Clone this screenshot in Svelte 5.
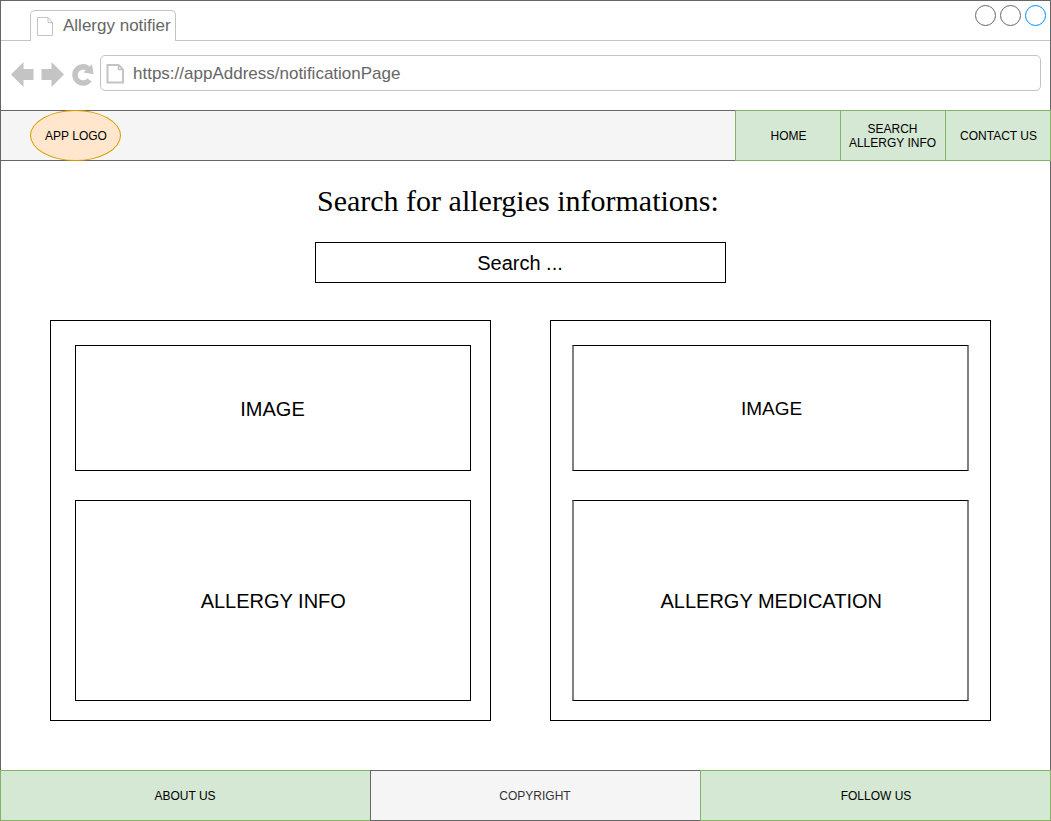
<script>
  const links = [
    { label: 'HOME', kind: 'home' },
    { label: 'SEARCH\nALLERGY INFO', kind: 'find' },
    { label: 'CONTACT US', kind: 'contact' }
  ];
  const cards = [
    { top: 'IMAGE', bottom: 'ALLERGY INFO', kind: 'info' },
    { top: 'IMAGE', bottom: 'ALLERGY MEDICATION', kind: 'medication' }
  ];
</script>

<div class="window">
  <div class="tabs">
    <div class="tab">
      <svg width="18" height="21" viewBox="0 0 18 21" fill="none" stroke="#c4c4c4">
        <path d="M1.5 1.5H12L16.5 6.5V19.5H1.5ZM12 1.5V6.5H16.5" />
      </svg>
      <span>Allergy notifier</span>
    </div>
    <svg class="controls" width="74" height="24" viewBox="0 0 74 24" fill="none" stroke="#666">
      <circle cx="11.5" cy="11.5" r="10" />
      <circle cx="36.5" cy="11.5" r="10" />
      <circle cx="61.5" cy="11.5" r="10" stroke="#008cff" />
    </svg>
  </div>

  <div class="toolbar">
    <svg class="arrows" width="99" height="36" viewBox="1 55 99 36">
      <path fill="#c4c4c4" d="M11 74.5L23.5 62V69H33.5V80H23.5V87Z" />
      <path fill="#c4c4c4" d="M64 74.5L51.5 62V69H41.5V80H51.5V87Z" />
      <path fill="none" stroke="#c4c4c4" stroke-width="5.5" d="M89.5 79.900A8.100 8.100 0 1 1 88 68.500" />
      <path fill="#c4c4c4" d="M92 64.200L93.600 74.300L83.300 72.600Z" />
    </svg>
    <div class="address">
      <svg width="18" height="20" viewBox="0 0 18 20" fill="none" stroke="#c4c4c4" stroke-width="2">
        <path d="M1.5 1H12.500L17 5.500V18.500H1.500Z" />
        <path stroke-width="1.500" d="M12.500 1V5.500H17" />
      </svg>
      <span>https://appAddress/notificationPage</span>
    </div>
  </div>

  <nav>
    <div class="logo">APP LOGO</div>
    <div class="links">
      {#each links as link}
        <div class="link {link.kind}">{link.label}</div>
      {/each}
    </div>
  </nav>

  <main>
    <h1>Search for allergies informations:</h1>
    <div class="search">Search ...</div>
    <div class="cards">
      {#each cards as card}
        <section class={card.kind}>
          <div class="image">{card.top}</div>
          <div class="text">{card.bottom}</div>
        </section>
      {/each}
    </div>
  </main>

  <footer>
    <div class="about">ABOUT US</div>
    <div class="copyright">COPYRIGHT</div>
    <div class="follow">FOLLOW US</div>
  </footer>
</div>

<style>
  :global(body) { background: #fff; }
  .window, .window * { box-sizing: border-box; }
  .window {
    width: 1051px;
    height: 821px;
    border: 1px solid #666;
    display: flex;
    flex-direction: column;
    font-family: "Liberation Sans", Arial, sans-serif;
    font-size: 12px;
    line-height: 14px;
    color: #000;
  }
  svg { display: block; flex: none; }
  .tabs {
    height: 40px;
    flex: none;
    border-bottom: 1px solid #c4c4c4;
    padding: 0 0 0 29px;
    display: flex;
    justify-content: space-between;
  }
  .tab {
    width: 146px;
    height: 31px;
    margin-top: 9px;
    border: 1px solid #c4c4c4;
    border-bottom: 0;
    border-radius: 5px 5px 0 0;
    background: #fff;
    display: flex;
    padding: 5px 0 0 5px;
    font-size: 17px;
    line-height: 20px;
    color: #666;
    white-space: nowrap;
  }
  .tab span { margin-left: 9px; }
  .controls { margin: 3px 2px 0 0; }
  .toolbar {
    height: 69px;
    flex: none;
    display: flex;
    padding-top: 14px;
  }
  .address {
    width: 941px;
    height: 36px;
    border: 1px solid #c4c4c4;
    border-radius: 5px;
    display: flex;
    padding: 8px 0 0 5px;
    font-size: 17px;
    line-height: 19px;
    color: #666;
  }
  .address span { margin-left: 9px; }
  nav {
    height: 51px;
    flex: none;
    margin: 0 -1px;
    background: #f5f5f5;
    border: 1px solid #666;
    display: flex;
    justify-content: space-between;
  }
  .logo {
    width: 91px;
    height: 51px;
    margin: -1px 0 0 29px;
    padding-left: 1px;
    background: #ffe6cc;
    border: 1px solid #d79b00;
    border-radius: 50%;
    display: flex;
    align-items: center;
    justify-content: center;
  }
  .links { display: flex; margin: -1px -1px 0 0; }
  .link {
    width: 106px;
    height: 51px;
    background: #d5e8d4;
    border: 1px solid #82b366;
    display: flex;
    align-items: center;
    justify-content: center;
    text-align: center;
    white-space: pre-line;
  }
  .link + .link { margin-left: -1px; }
  .home, .contact { padding-left: 1px; }
  .find { padding-right: 1px; }
  main { flex: 1; min-height: 0; padding-top: 23px; }
  h1 {
    margin: 0 0 0 316px;
    font: 400 30px/34px "Liberation Serif", "Times New Roman", serif;
    white-space: nowrap;
  }
  .search {
    width: 411px;
    height: 41px;
    margin: 24px 0 0 314px;
    padding-right: 1px;
    border: 1px solid #000;
    display: flex;
    align-items: center;
    justify-content: center;
    font-size: 20px;
  }
  .cards {
    display: flex;
    gap: 59px;
    margin: 37px 0 0 49px;
    font-size: 20px;
  }
  section {
    width: 441px;
    height: 401px;
    border: 1px solid #000;
    padding: 24px 0 0 24px;
  }
  .image, .text {
    width: 396px;
    border: 1px solid #000;
    display: flex;
    align-items: center;
    justify-content: center;
  }
  .image { height: 126px; padding: 2px 1px 0 0; }
  .text { height: 201px; margin-top: 29px; padding-left: 0.5px; }
  .medication { padding-left: 21px; }
  .medication .image, .medication .text {
    width: 397px;
    border-left: 2px solid #808080;
    border-right: 2px solid #808080;
  }
  .medication .image { font-size: 19px; padding: 2px 0 0 2px; }
  .medication .text { padding-left: 1.5px; }
  footer {
    height: 51px;
    flex: none;
    margin: 0 -1px -1px;
    display: flex;
  }
  footer div {
    border: 1px solid #82b366;
    background: #d5e8d4;
    display: flex;
    align-items: center;
    justify-content: center;
  }
  footer .about { width: 371px; padding-right: 1px; }
  footer .copyright {
    width: 331px;
    margin-left: -1px;
    padding-right: 1px;
    background: #f5f5f5;
    border-color: #666;
    color: #333;
  }
  footer .follow { width: 351px; margin-left: -1px; padding-left: 1px; }
</style>
